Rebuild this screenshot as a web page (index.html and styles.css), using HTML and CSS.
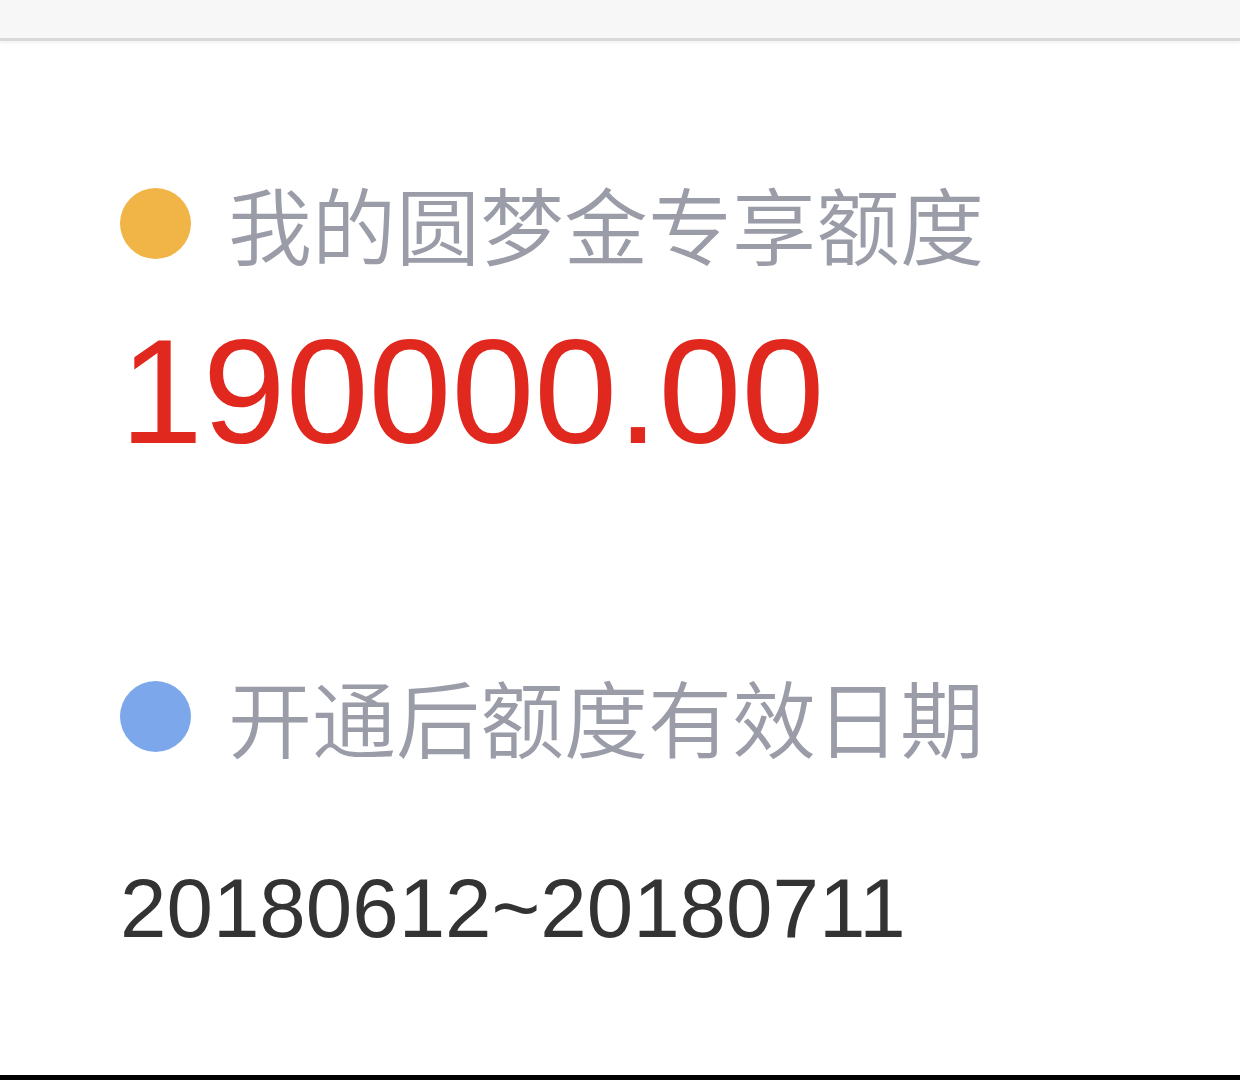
FILE: index.html
```html
<!DOCTYPE html>
<html lang="zh-CN">
<head>
    <meta charset="UTF-8">
    <meta name="viewport" content="width=device-width, initial-scale=1.0">
    <title>圆梦金额度</title>
    <link rel="stylesheet" href="styles.css">
</head>
<body>
    <div class="topbar"></div>
    <div class="container">
        <div class="label-row">
            <span class="dot dot-orange"></span>
            <span class="label">我的圆梦金专享额度</span>
        </div>
        <div class="amount">190000.00</div>

        <div class="label-row label-row-second">
            <span class="dot dot-blue"></span>
            <span class="label">开通后额度有效日期</span>
        </div>
        <div class="period">20180612~20180711</div>
    </div>
    <div class="bottombar"></div>
</body>
</html>
```

FILE: styles.css
```css
body {
    font-family: "Liberation Sans", "Noto Sans CJK SC", sans-serif;
    margin: 0;
    padding: 0;
    background-color: #fff;
    height: 1080px;
    display: flex;
    flex-direction: column;
    overflow: hidden;
}
.topbar {
    height: 38px;
    background-color: #f7f7f7;
    border-bottom: 3px solid #d9d9d9;
    box-shadow: 0 2px 3px rgba(0, 0, 0, 0.06);
}
.container {
    flex: 1;
    padding: 0 120px;
}
.label-row {
    display: flex;
    align-items: center;
    height: 90px;
    margin-top: 137px;
}
.label-row-second {
    margin-top: 205px;
}
.dot {
    width: 71px;
    height: 71px;
    border-radius: 50%;
    margin-right: 37px;
    flex-shrink: 0;
}
.dot-orange {
    background-color: #f1b447;
}
.dot-blue {
    background-color: #7ca8eb;
}
.label {
    font-family: "Noto Sans CJK SC", sans-serif;
    font-weight: 350;
    font-size: 84px;
    line-height: 1;
    color: #9a9ca8;
}
.amount {
    margin-top: 49px;
    font-size: 149px;
    line-height: 1;
    color: #e0281e;
}
.period {
    margin-top: 106px;
    font-size: 83.5px;
    line-height: 1;
    color: #333;
}
.bottombar {
    height: 5px;
    background-color: #000;
}
```
